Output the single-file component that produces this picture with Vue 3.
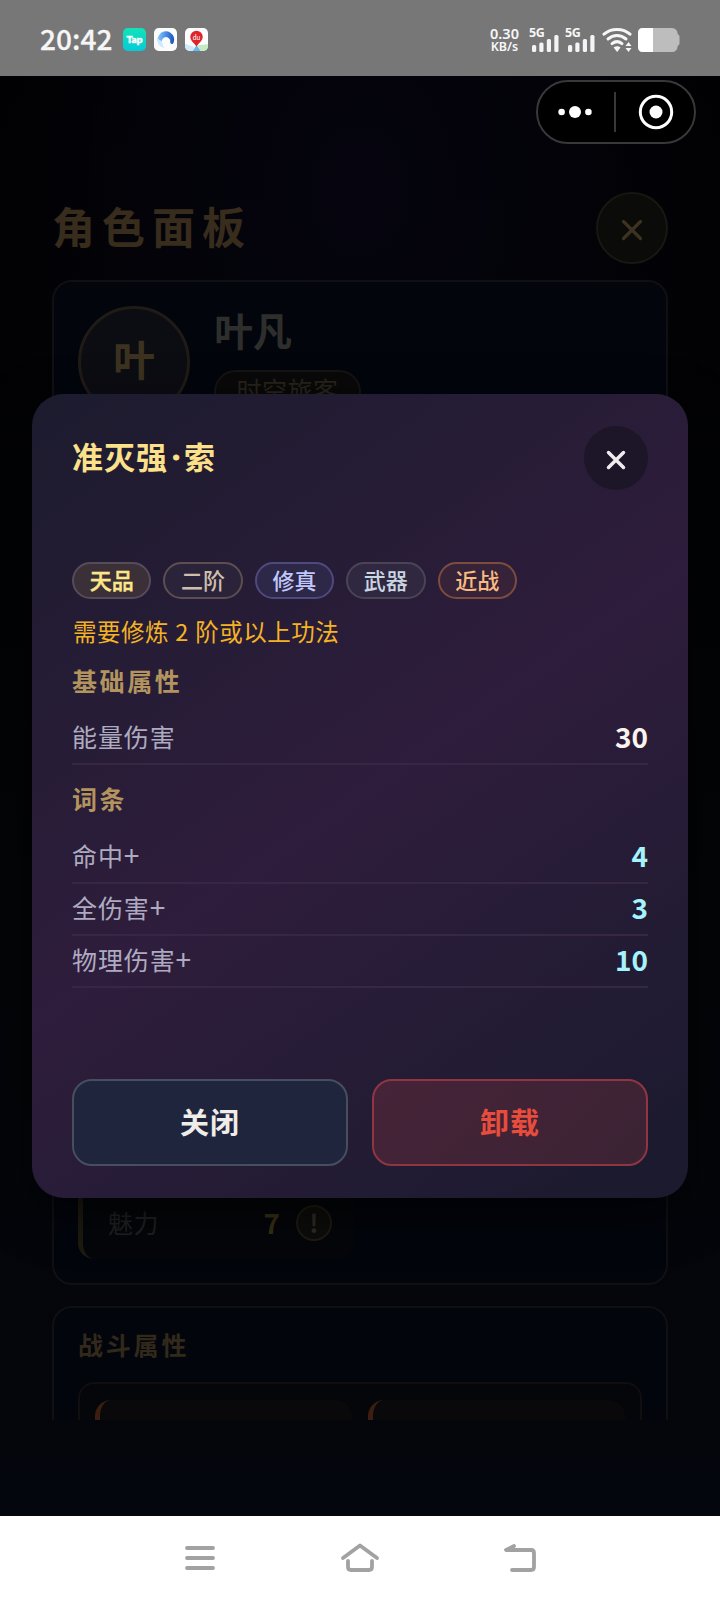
<script setup>
const tags = [
  { text: '天品', kind: 'heaven' },
  { text: '二阶', kind: 'tier' },
  { text: '修真', kind: 'path' },
  { text: '武器', kind: 'slot' },
  { text: '近战', kind: 'melee' },
]
const baseStats = [{ name: '能量伤害', value: 30 }]
const affixes = [
  { name: '命中', value: 4 },
  { name: '全伤害', value: 3 },
  { name: '物理伤害', value: 10 },
]
</script>

<template>
  <div class="screen">
    <header class="status">
      <span class="clock">20:42</span>
      <svg class="app" viewBox="0 0 24 24">
        <defs>
          <linearGradient id="tap" x1="0" y1="0" x2="0" y2="1">
            <stop offset="0" stop-color="#12e2b8" /><stop offset="1" stop-color="#06cbd8" />
          </linearGradient>
        </defs>
        <rect width="24" height="24" rx="5" fill="url(#tap)" />
        <text x="12" y="15.500" text-anchor="middle" font-size="10.500" font-weight="900" font-family="Lato, sans-serif" fill="#fff" stroke="#fff" stroke-width="0.5">Tap</text>
      </svg>
      <svg class="app" viewBox="0 0 24 24">
        <defs>
          <linearGradient id="swirl" x1="0" y1="0.3" x2="1" y2="0.4">
            <stop offset="0" stop-color="#8cc8fa" /><stop offset="0.6" stop-color="#3b7fe0" /><stop offset="1" stop-color="#2455b8" />
          </linearGradient>
        </defs>
        <rect width="24" height="24" rx="5" fill="#fbfcfe" />
        <path d="M8 19.500A8.600 8.600 0 1 1 19.800 16.500q-2 .8-3-1.500A4.400 4.400 0 1 0 8.300 15q-.8 2.400-.3 4.500z" fill="url(#swirl)" />
        <path d="M11 20.800A8.600 8.600 0 0 1 3.600 10.500Q5.500 13 8.300 13.500q0 4.500 2.700 7.300z" fill="#cfe9fd" />
      </svg>
      <svg class="app" viewBox="0 0 24 24">
        <rect width="24" height="24" rx="5" fill="#fdfdfd" />
        <path d="M0 16.500L10 20l-2 4H5a5 5 0 0 1-5-5z" fill="#cfe9f8" />
        <path d="M8 24l4-6 5 6z" fill="#67b9ee" />
        <path d="M13 18l11-1v2a5 5 0 0 1-5 5h-3z" fill="#c3ecc0" />
        <path d="M12 19.500C10.500 16 5.500 13.500 5.500 9a6.500 6.200 0 0 1 13 0c0 4.500-5 7-6.500 10.500z" fill="#e0242c" />
        <text x="12" y="12" text-anchor="middle" font-size="7" font-family="Lato, sans-serif" fill="#fff">du</text>
      </svg>

      <span class="rate"><b>0.30</b><b>KB/s</b></span>
      <span v-for="n in 2" :key="n" class="signal">
        <b>5G</b>
        <svg width="30" height="26" viewBox="0 0 30 26" fill="#f4f4f4">
          <rect x="2" y="18" width="4.200" height="7" rx="1.500" /><rect x="9.300" y="15.500" width="4.200" height="9.500" rx="1.500" />
          <rect x="16.800" y="12" width="4.200" height="13" rx="1.500" /><rect x="24.300" y="8" width="4.200" height="17" rx="1.500" />
        </svg>
      </span>
      <svg class="wifi" viewBox="0 0 30 26">
        <g fill="none" stroke="#f6f6f6" stroke-width="3" stroke-linecap="round">
          <path d="M2 7.200C9 .8 21 .8 28 7.200" /><path d="M6 12c5.500-4.600 12.500-4.600 18 0" /><path d="M10 16.600c3-2.400 7-2.400 10 0" />
        </g>
        <path d="M11.500 20.500q4-2.300 7 0L15.200 25z" fill="#f6f6f6" />
        <path d="M26.500 15l3 4h-6zM26.500 25l3-4h-6z" fill="#f6f6f6" />
      </svg>
      <svg class="battery" viewBox="0 0 44 26">
        <path d="M6 1h29q5 0 5.800 6l1.700 2v8l-1.700 2q-.8 6-5.800 6H6q-5 0-5-5V6q0-5 5-5z" fill="#bdbdbd" />
        <path d="M16 1H6Q1 1 1 6v14q0 5 5 5h10z" fill="#fff" />
      </svg>
    </header>

    <main class="stage">
      <div class="page">
        <div class="page-head">
          <h1>角色面板</h1>
          <div class="page-close">
            <svg width="22" height="22" viewBox="0 0 22 22"><path d="M2.500 2.500l17 17M19.500 2.500l-17 17" /></svg>
          </div>
        </div>
        <div class="scroller">
          <section class="card profile">
            <div class="who">
              <div class="avatar">叶</div>
              <div class="who-text">
                <div class="name">叶凡</div>
                <div class="role">时空旅客</div>
              </div>
            </div>
            <div class="attr">
              <span class="attr-name">魅力</span>
              <span class="attr-value">7</span>
              <span class="hint">!</span>
            </div>
          </section>
          <section class="card combat">
            <h2>战斗属性</h2>
            <div class="combat-box"><i></i><i></i></div>
          </section>
        </div>
      </div>

      <div class="capsule">
        <svg width="34" height="14" viewBox="0 0 34 14" fill="#fff"><circle cx="3.600" cy="7" r="3.300" /><circle cx="17" cy="7" r="6" /><circle cx="30.400" cy="7" r="3.300" /></svg>
        <span class="bar"></span>
        <svg width="36" height="36" viewBox="0 0 36 36"><circle cx="18" cy="18" r="15.700" fill="none" stroke="#fff" stroke-width="3" /><circle cx="18" cy="18" r="6.500" fill="#fff" /></svg>
      </div>

      <div class="modal">
        <div class="modal-head">
          <h3>准灭强<span class="dot">·</span>索</h3>
          <div class="modal-close">
            <svg width="20" height="20" viewBox="0 0 20 20"><path d="M2.500 2.500l15 15M17.500 2.500l-15 15" /></svg>
          </div>
        </div>
        <div class="modal-body">
          <div class="tags">
            <span v-for="t in tags" :key="t.text" class="tag" :class="t.kind">{{ t.text }}</span>
          </div>
          <p class="need">需要修炼 2 阶或以上功法</p>
          <h4>基础属性</h4>
          <div v-for="s in baseStats" :key="s.name" class="row">
            <span>{{ s.name }}</span><b>{{ s.value }}</b>
          </div>
          <h4 class="second">词条</h4>
          <div v-for="s in affixes" :key="s.name" class="row affix">
            <span>{{ s.name }}<em>+</em></span><b>{{ s.value }}</b>
          </div>
        </div>
        <div class="actions">
          <div class="btn">关闭</div>
          <div class="btn danger">卸载</div>
        </div>
      </div>
    </main>

    <nav class="nav">
      <svg width="32" height="32" viewBox="0 0 32 32"><path d="M3 6h26M3 16h26M3 26h26" /></svg>
      <svg width="40" height="32" viewBox="0 0 40 32"><path d="M3 16L20 3.500 37 16M8 19v6q0 3 3 3h18q3 0 3-3v-6" /></svg>
      <svg width="34" height="32" viewBox="0 0 34 32"><path d="M11 4L3 8h25q3 0 3 3v14q0 3-3 3H9" /></svg>
    </nav>
  </div>
</template>

<style>
body { margin: 0; background: #020307; }
</style>

<style scoped>
* { box-sizing: border-box; }
h1, h2, h3, h4, p { margin: 0; }
.screen {
  width: 720px; height: 1600px; display: flex; flex-direction: column; overflow: hidden;
  font-family: "Noto Sans CJK SC", sans-serif;
}
.status {
  height: 76px; flex: none; display: flex; align-items: center; padding: 3px 39px 0 40px;
  background: #777; color: #f6f6f6;
}
.clock { width: 83px; font-size: 28px; line-height: 40px; font-weight: 500; letter-spacing: 0.1px; -webkit-text-stroke: 0.3px #f6f6f6; padding-bottom: 4px; }
.app { width: 23px; height: 23px; margin-right: 8px; }
.rate {
  width: 33px; margin-left: auto; margin-right: 9px; display: flex; flex-direction: column; align-items: center;
  font-family: "Noto Sans", sans-serif; font-size: 14.500px;
}
.rate b { font-weight: 600; white-space: nowrap; line-height: 14px; }
.rate b:last-child { font-size: 12.500px; line-height: 13px; }
.signal { position: relative; width: 30px; height: 26px; margin-right: 6px; }
.signal svg { display: block; }
.signal b {
  position: absolute; left: -1px; top: -3px; font-family: "Noto Sans", sans-serif;
  font-size: 12.500px; line-height: 17px; letter-spacing: -0.4px;
}
.wifi { width: 30px; height: 26px; margin-right: 5px; }
.battery { width: 44px; height: 26px; }

.stage {
  position: relative; height: 1440px; flex: none;
  background:
    radial-gradient(ellipse 380px 520px at 50% 8%, rgba(6, 5, 17, 0.85), rgba(5, 4, 14, 0)),
    linear-gradient(180deg, #010103 0%, #040507 60%, #04060d 100%);
}
.page { padding: 116px 52px 0; }
.page-head { display: flex; align-items: center; justify-content: space-between; height: 72px; }
h1 { font-size: 43px; line-height: 60px; letter-spacing: 7px; font-weight: 700; color: #382c1c; margin-top: -6px; }
.page-close {
  width: 72px; height: 72px; border-radius: 50%; border: 2px solid #191712; background: #0b0b0a;
  display: flex; align-items: center; justify-content: center; padding-top: 4px;
}
.page-close path { fill: none; stroke: #3e3220; stroke-width: 3.200; stroke-linecap: round; }
.scroller { height: 1140px; margin-top: 16px; overflow: hidden; }
.card { border: 2px solid #0e1013; border-radius: 20px; background: #02050c; padding: 24px; }
.profile { height: 1005px; display: flex; flex-direction: column; justify-content: space-between; }
.who { display: flex; gap: 24px; }
.avatar {
  width: 112px; height: 112px; border-radius: 50%; border: 3px solid #211b17; background: #0c0c13;
  font-size: 42px; font-weight: 700; color: #3b331f; display: flex; align-items: center; justify-content: center;
  padding-bottom: 9px;
}
.name { font-size: 39px; line-height: 52px; font-weight: 700; color: #2e2f2d; margin-top: -3px; }
.role {
  width: 147px; height: 44px; margin-top: 15px; border: 2px solid #151413; border-radius: 22px; background: #090909;
  font-size: 25px; line-height: 35px; letter-spacing: 0.5px; text-align: center; color: #29231b;
}
.attr {
  width: 276px; height: 74px; border-left: 5px solid #1e1b10; border-radius: 16px; background: #04060a;
  display: flex; align-items: center; padding: 0 22px 0 25px;
}
.attr-name { font-size: 25px; color: #202223; letter-spacing: 0.5px; }
.attr-value { margin-left: auto; margin-right: 16px; font-size: 28px; font-weight: 700; color: #393116; }
.hint {
  width: 36px; height: 36px; margin-top: 2px; border-radius: 50%; border: 2px solid #201b13; background: #0d0d0b;
  font-size: 25px; line-height: 30px; text-align: center; font-weight: 700; color: #322e27;
}
.attr, .hint { flex: none; }
.combat { margin-top: 21px; height: 600px; padding-top: 19px; }
h2 { font-size: 25px; line-height: 34px; letter-spacing: 2.800px; font-weight: 700; color: #32291b; }
.combat-box {
  margin-top: 21px; height: 300px; border: 2px solid #110e0f; border-radius: 16px; background: #05060a;
  padding: 16px 15px; display: grid; grid-template-columns: 257px 257px; column-gap: 16px;
}
.combat-box i { height: 90px; border-left: 5px solid #3c1e10; border-radius: 16px; background: #09080b; }

.capsule {
  position: absolute; left: 536px; top: 4px; width: 160px; height: 64px; border-radius: 32px;
  border: 2px solid #38383a; background: #000; display: flex; align-items: center; padding: 0 20px 0 20px;
  justify-content: space-between;
}
.bar { width: 2px; height: 40px; background: #38383a; }

.modal {
  position: absolute; left: 32px; top: 318px; width: 656px; height: 804px; border-radius: 32px;
  padding: 32px 40px; display: flex; flex-direction: column;
  background: linear-gradient(145deg, #1c1b2e 0%, #2e1d3c 50%, #1a1a2e 100%);
  box-shadow: 0 16px 48px rgba(0, 0, 0, 0.65);
}
.modal-head { display: flex; justify-content: space-between; align-items: center; height: 64px; }
h3 { display: flex; font-size: 31px; line-height: 44px; letter-spacing: 1px; font-weight: 700; color: #fde08a; margin-top: -4px; }
.dot { width: 16px; display: flex; justify-content: center; letter-spacing: 0; font-family: "Noto Sans", sans-serif; -webkit-text-stroke: 0.8px currentColor; }
.modal-close {
  width: 64px; height: 64px; border-radius: 50%; background: #1d1629; display: flex;
  align-items: center; justify-content: center; padding-top: 4px;
}
.modal-close path { fill: none; stroke: #f0ebee; stroke-width: 3.500; stroke-linecap: round; }
.modal-body { flex: 1; padding-top: 72px; }
.tags { display: flex; gap: 12px; }
.tag {
  width: 79.400px; height: 37px; border-radius: 19px; border: 2px solid #4a4554; background: #2f2840;
  font-size: 22px; line-height: 30px; font-weight: 500; text-align: center; color: #cbd5e1;
}
.heaven { background: #3b3038; border-color: #544d58; color: #fde68a; -webkit-text-stroke: 0.4px currentColor; }
.tier { border-color: #5d4e50; background: #2b233a; color: #cdbfac; }
.path { border-color: #4f4a7c; background: #2d2748; color: #c0c8fb; }
.melee { border-color: #7c4d3d; background: #36233a; color: #f9bb80; }
.need { margin-top: 15px; padding-left: 1px; font-size: 23.500px; line-height: 34px; letter-spacing: 0.5px; word-spacing: 0.6px; color: #f5b324; }
h4 { margin-top: 15px; font-size: 25px; line-height: 34px; letter-spacing: 2.600px; font-weight: 700; color: #b3945f; }
h4 + .row { margin-top: 16px; }
.need + h4 { margin-top: 15px; }
.second { margin-top: 16px; }
.second + .row { margin-top: 17px; }
.row {
  height: 52px; display: flex; justify-content: space-between; align-items: center; padding-bottom: 4px;
  border-bottom: 2px solid #362844; font-size: 25px; line-height: 38px; letter-spacing: 0.9px; color: #aeabc0;
}
.row em { font-style: normal; font-size: 28px; line-height: 30px; letter-spacing: 0; }
.row b { font-size: 28px; font-weight: 700; letter-spacing: 0; color: #faf3ee; }
.affix b { color: #a5f3fc; }
.actions { display: grid; grid-template-columns: 1fr 1fr; gap: 24px; height: 87px; }
.btn {
  border: 2px solid #474e60; border-radius: 20px; background: #20253e; color: #f0ede9;
  font-size: 29px; line-height: 81px; letter-spacing: 1px; font-weight: 700; text-align: center;
}
.danger { border-color: #903643; background: linear-gradient(135deg, #462338, #3b2334); color: #e74c3c; }

.nav { flex: 1; background: #fff; display: flex; align-items: center; justify-content: space-between; padding: 0 183px 1px 184px; }
.nav path { fill: none; stroke: #a2a2a2; stroke-width: 3.800; stroke-linecap: round; stroke-linejoin: round; }
</style>
